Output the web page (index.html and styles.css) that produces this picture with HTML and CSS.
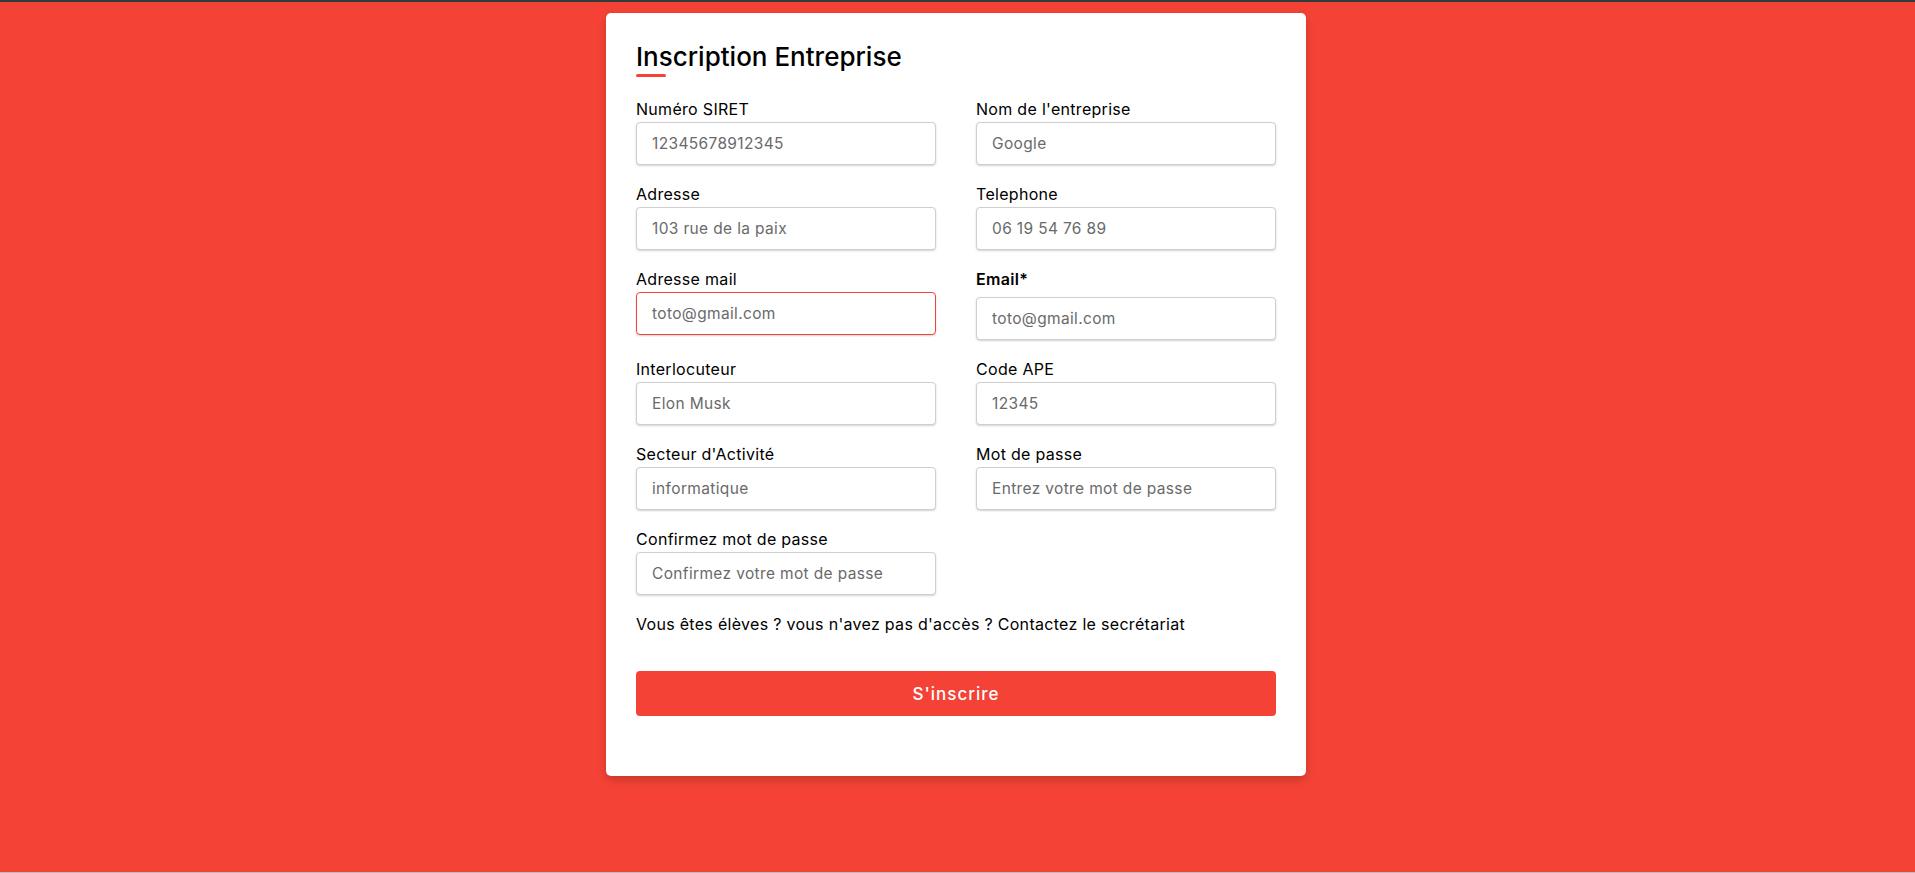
FILE: index.html
```html
<!DOCTYPE html>
<html lang="fr">
<head>
<meta charset="utf-8">
<title>Inscription Entreprise</title>
<link rel="stylesheet" href="styles.css">
</head>
<body>
<div class="topbar"></div>
<main class="page">
  <section class="card">
    <h1 class="title">Inscription Entreprise</h1>
    <div class="title-bar"></div>
    <form class="form">
      <div class="grid">
        <div class="field">
          <label class="label">Numéro SIRET</label>
          <input class="input" type="text" placeholder="12345678912345">
        </div>
        <div class="field">
          <label class="label">Nom de l'entreprise</label>
          <input class="input" type="text" placeholder="Google">
        </div>
        <div class="field">
          <label class="label">Adresse</label>
          <input class="input" type="text" placeholder="103 rue de la paix">
        </div>
        <div class="field">
          <label class="label">Telephone</label>
          <input class="input" type="text" placeholder="06 19 54 76 89">
        </div>
        <div class="field">
          <label class="label">Adresse mail</label>
          <input class="input input-error" type="text" placeholder="toto@gmail.com">
        </div>
        <div class="field">
          <label class="label label-strong">Email*</label>
          <input class="input" type="text" placeholder="toto@gmail.com">
        </div>
        <div class="field">
          <label class="label">Interlocuteur</label>
          <input class="input" type="text" placeholder="Elon Musk">
        </div>
        <div class="field">
          <label class="label">Code APE</label>
          <input class="input" type="text" placeholder="12345">
        </div>
        <div class="field">
          <label class="label">Secteur d'Activité</label>
          <input class="input" type="text" placeholder="informatique">
        </div>
        <div class="field">
          <label class="label">Mot de passe</label>
          <input class="input" type="password" placeholder="Entrez votre mot de passe">
        </div>
        <div class="field">
          <label class="label">Confirmez mot de passe</label>
          <input class="input" type="password" placeholder="Confirmez votre mot de passe">
        </div>
        <p class="note">Vous êtes élèves ? vous n'avez pas d'accès ? Contactez le secrétariat</p>
      </div>
      <button class="submit" type="button">S'inscrire</button>
    </form>
  </section>
</main>
</body>
</html>
```
FILE: styles.css
```css
* { box-sizing: border-box; }

html, body {
  margin: 0;
  padding: 0;
  background: #bdbdbd;
  font-family: "Inter", "Noto Sans", sans-serif;
  color: #000;
}

.topbar {
  height: 2px;
  background: #2f3c39;
}

.page {
  height: 870px;
  background: #f44336;
  padding: 11px 3px 0 0;
}

.card {
  width: 700px;
  margin: 0 auto;
  background: #fff;
  border-radius: 5px;
  padding: 26px 30px 60px;
  box-shadow: 0 4px 10px rgba(0, 0, 0, 0.18);
}

.title {
  margin: 0;
  font-size: 26px;
  line-height: 36px;
  font-weight: 500;
  letter-spacing: 0;
}

.title-bar {
  width: 30px;
  height: 3px;
  margin-top: -1px;
  background: #f44336;
  border-radius: 2px;
}

.form {
  margin-top: 22px;
}

.grid {
  display: grid;
  grid-template-columns: 300px 300px;
  column-gap: 40px;
  row-gap: 19px;
}

.field {
  display: flex;
  flex-direction: column;
}

.label {
  font-size: 16px;
  line-height: 20px;
  letter-spacing: 0.3px;
  margin-bottom: 3px;
}

.label-strong {
  font-weight: 600;
  margin-bottom: 8px;
}

.input {
  height: 43px;
  width: 100%;
  border: 1px solid #cfcfcf;
  border-radius: 4px;
  padding: 0 15px;
  font-family: inherit;
  font-size: 15.5px;
  letter-spacing: 0.35px;
  color: #555;
  background: #fff;
  box-shadow: 0 1px 2px rgba(0, 0, 0, 0.18);
  outline: none;
}

.input::placeholder {
  color: #6a6a6a;
}

.input-error {
  border-color: #f44336;
}

.note {
  grid-column: 1 / span 2;
  margin: 0;
  font-size: 16px;
  line-height: 20px;
  letter-spacing: 0.3px;
}

.submit {
  display: block;
  width: 100%;
  height: 45px;
  margin-top: 37px;
  border: none;
  border-radius: 4px;
  background: #f44336;
  color: #fff;
  font-family: inherit;
  font-size: 17px;
  font-weight: 500;
  letter-spacing: 1px;
}
```
